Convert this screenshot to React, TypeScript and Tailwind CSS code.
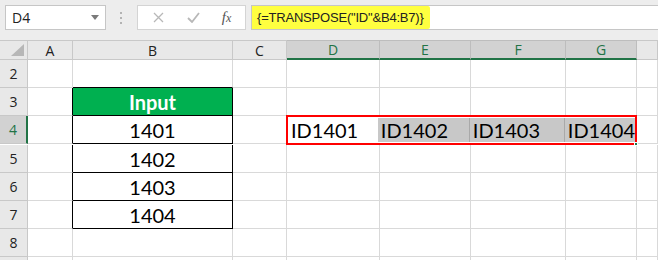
const cols = ['A', 'B', 'C', 'D', 'E', 'F', 'G', ''];
const selectedCols = ['D', 'E', 'F', 'G'];
const values = ['1401', '1402', '1403', '1404'];

const cellFont = { fontFamily: 'Lato, "Liberation Sans", sans-serif' };

function RowHeader({ n, active }: { n?: number; active?: boolean }) {
  return (
    <div
      className={
        active
          ? 'flex items-center justify-center h-[28px] bg-[#d2d2d2] text-[#217346] border-b border-[#c8c8c8] border-r-2 border-r-[#217346] text-[14px]'
          : 'flex items-center justify-center h-[28px] bg-[#e8e8e8] text-[#222] border-b border-r border-[#c8c8c8] text-[14px]'
      }
    >
      {n}
    </div>
  );
}

function Cell({ className = '' }: { className?: string }) {
  return <div className={`h-[28px] border-r border-b border-[#d9d9d9] ${className}`} />;
}

function DataCell({ value, green }: { value: string; green?: boolean }) {
  return (
    <div
      style={cellFont}
      className={
        green
          ? 'flex items-center justify-center h-[28px] bg-[#00b050] text-white font-bold text-[20px] border-r border-b border-black'
          : 'flex items-center justify-center h-[28px] bg-white text-black text-[20px] border-r border-b border-black'
      }
    >
      {value}
    </div>
  );
}

function EmptyRow({ n, bClass = '' }: { n?: number; bClass?: string }) {
  return (
    <>
      <RowHeader n={n} />
      <Cell />
      <Cell className={bClass} />
      <Cell />
      <Cell />
      <Cell />
      <Cell />
      <Cell />
      <Cell />
    </>
  );
}

export default function App() {
  return (
    <div
      className="w-[658px] h-[260px] overflow-hidden bg-white"
      style={{ fontFamily: '"Open Sans", "Noto Sans", sans-serif' }}
    >
      {/* Formula bar */}
      <div className="flex items-start h-[40px] bg-[#ededed] pt-[5px] pl-[5px]">
        <div className="flex items-center justify-between w-[101px] h-[25px] bg-white border border-[#c6c6c6] pl-[6px] pr-[6px]">
          <span className="text-[14px] text-[#222]">D4</span>
          <svg width="8" height="5" viewBox="0 0 8 5">
            <path d="M0 0h8L4 5z" fill="#7a7a7a" />
          </svg>
        </div>
        <div className="flex items-center justify-center w-[31px] h-[25px]">
          <svg width="3" height="12" viewBox="0 0 3 12">
            <rect x="0" y="0" width="2" height="2" fill="#b3b3b3" />
            <rect x="0" y="5" width="2" height="2" fill="#b3b3b3" />
            <rect x="0" y="10" width="2" height="2" fill="#b3b3b3" />
          </svg>
        </div>
        <div className="flex items-center w-[109px] h-[25px] bg-white border border-[#d4d4d4]">
          <div className="w-[40px] flex justify-center">
            <svg width="11" height="11" viewBox="0 0 11 11">
              <path d="M1 1l9 9M10 1l-9 9" stroke="#b8b8b8" strokeWidth="1.3" />
            </svg>
          </div>
          <div className="w-[30px] flex justify-center">
            <svg width="13" height="11" viewBox="0 0 13 11">
              <path d="M1 6l4 4 7-9" stroke="#b8b8b8" strokeWidth="1.8" fill="none" />
            </svg>
          </div>
          <div className="flex-1 flex justify-center">
            <span
              className="italic text-[15px] text-[#555] leading-none"
              style={{ fontFamily: '"Liberation Serif", serif' }}
            >
              f<span className="text-[12px]">x</span>
            </span>
          </div>
        </div>
        <div className="ml-[5px] flex-1 h-[25px] bg-white border border-r-0 border-[#c6c6c6] flex">
          <div
            className="flex items-center h-full bg-[#ffff40] pl-[5px] pr-[6px] rounded-r-[2px] text-[13px] text-[#222] tracking-[-0.2px]"
            style={{ fontFamily: '"Liberation Sans", Arial, sans-serif' }}
          >
            {'{=TRANSPOSE("ID"&B4:B7)}'}
          </div>
        </div>
      </div>

      {/* Grid */}
      <div className="grid grid-cols-[28px_45px_160px_54px_93px_91px_95px_71px_1fr]">
        {/* column headers */}
        <div className="relative h-[20px] bg-[#e8e8e8] border-t border-r border-b border-[#c8c8c8]">
          <svg className="absolute right-[3px] bottom-[3px]" width="13" height="12" viewBox="0 0 13 12">
            <path d="M13 0V12H0z" fill="#b7b7b7" />
          </svg>
        </div>
        {cols.map((c, i) =>
          selectedCols.includes(c) ? (
            <div
              key={i}
              className="flex items-center justify-center h-[20px] bg-[#d2d2d2] text-[#217346] text-[14px] border-t border-r border-[#bdbdbd] border-b-2 border-b-[#217346]"
            >
              {c}
            </div>
          ) : (
            <div
              key={i}
              className="flex items-center justify-center h-[20px] bg-[#e8e8e8] text-[#222] text-[14px] border-t border-r border-b border-[#c8c8c8]"
            >
              {c}
            </div>
          )
        )}

        {/* row 2 */}
        <EmptyRow n={2} bClass="border-b-black" />

        {/* row 3 */}
        <RowHeader n={3} />
        <Cell className="!border-r-black" />
        <DataCell value="Input" green />
        <Cell />
        <Cell />
        <Cell />
        <Cell />
        <Cell />
        <Cell />

        {/* row 4 */}
        <RowHeader n={4} active />
        <Cell className="!border-r-black" />
        <DataCell value={values[0]} />
        <Cell />
        <div
          style={cellFont}
          className="relative col-span-4 -ml-px -mt-px w-[351px] h-[30px] border-2 border-[#ff0000] flex text-[20px] text-black"
        >
          <div className="w-[92px] flex items-center pl-[3px] bg-white">ID1401</div>
          <div className="flex-1 flex py-px">
            <div className="w-[91px] flex items-center pl-[3px] bg-[#c8c8c8]">ID1402</div>
            <div className="w-[95px] flex items-center pl-[3px] bg-[#c8c8c8] border-l border-[#a9a9a9]">ID1403</div>
            <div className="flex-1 flex items-center pl-[3px] bg-[#c8c8c8] border-l border-[#a9a9a9]">ID1404</div>
          </div>
          <div className="absolute -right-[3px] -bottom-[3px] w-[4px] h-[4px] bg-[#217346] border border-white" />
        </div>
        <Cell />

        {values.slice(1).map((v, i) => (
          <div key={v} className="contents">
            <RowHeader n={i + 5} />
            <Cell className="!border-r-black" />
            <DataCell value={v} />
            <Cell />
            <Cell />
            <Cell />
            <Cell />
            <Cell />
            <Cell />
          </div>
        ))}

        <EmptyRow n={8} />
        <EmptyRow />
      </div>
    </div>
  );
}
